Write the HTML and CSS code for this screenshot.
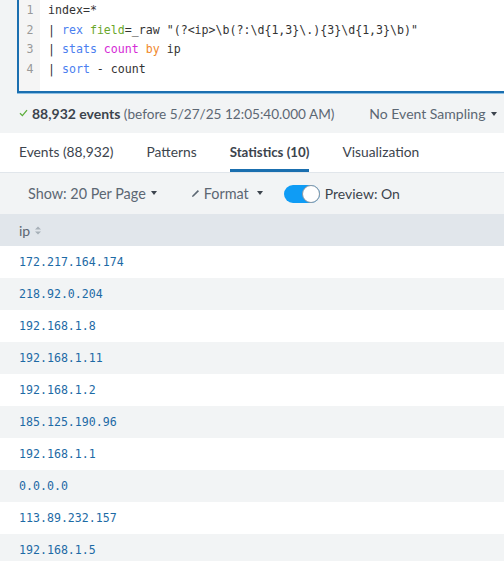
FILE: index.html
```html
<!DOCTYPE html>
<html>
<head>
<meta charset="utf-8">
<link rel="stylesheet" href="styles.css">
</head>
<body>
<div class="editor-wrap">
  <div class="editor">
    <div class="gutter">
      <div class="ln">1</div><div class="ln">2</div><div class="ln">3</div><div class="ln">4</div>
    </div>
    <div class="code">
      <div class="cl">index=*</div>
      <div class="cl">| <span class="kw">rex</span> <span class="arg">field</span>=_raw "(?&lt;ip&gt;\b(?:\d{1,3}\.){3}\d{1,3}\b)"</div>
      <div class="cl">| <span class="kw">stats</span> <span class="fn">count</span> <span class="by">by</span> ip</div>
      <div class="cl">| <span class="kw">sort</span> - count</div>
    </div>
  </div>
</div>
<div class="status">
  <div class="status-left">
    <svg class="check" width="9" height="8" viewBox="0 0 9 8"><path d="M1 4.2 L3.4 6.6 L8 1.2" fill="none" stroke="#5cae3a" stroke-width="1.3"/></svg>
    <span><b>88,932 events</b> (before 5/27/25 12:05:40.000 AM)</span>
  </div>
  <div class="status-right">No Event Sampling <span class="caret"></span></div>
</div>
<div class="tabs">
  <div class="tab">Events (88,932)</div>
  <div class="tab">Patterns</div>
  <div class="tab active">Statistics (10)</div>
  <div class="tab">Visualization</div>
</div>
<div class="toolbar">
  <div class="tool show">Show: 20 Per Page <span class="caret"></span></div>
  <div class="tool format">
    <svg class="pencil" width="9" height="9" viewBox="0 0 9 9"><path d="M1 8 L1.4 6.4 L6.8 1 L8 2.2 L2.6 7.6 Z" fill="#5c6773"/></svg>
    Format <span class="caret fcaret"></span>
  </div>
  <div class="tool preview">
    <span class="toggle"><span class="knob"></span></span>
    Preview: On
  </div>
</div>
<div class="table">
  <div class="thead">ip <svg class="sort" width="6" height="9" viewBox="0 0 6 9"><path d="M0 3.5 L3 0.5 L6 3.5 Z M0 5.5 L3 8.5 L6 5.5 Z" fill="#a7b0b8"/></svg></div>
  <div class="row">172.217.164.174</div>
  <div class="row alt">218.92.0.204</div>
  <div class="row">192.168.1.8</div>
  <div class="row alt">192.168.1.11</div>
  <div class="row">192.168.1.2</div>
  <div class="row alt">185.125.190.96</div>
  <div class="row">192.168.1.1</div>
  <div class="row alt">0.0.0.0</div>
  <div class="row">113.89.232.157</div>
  <div class="row alt">192.168.1.5</div>
</div>
</body>
</html>
```
FILE: styles.css
```css
* { box-sizing: border-box; }
html, body { margin: 0; padding: 0; }
body {
  width: 504px;
  background: #f2f4f5;
  font-family: Lato, "Open Sans", sans-serif;
  color: #3c444d;
  overflow: hidden;
}
.editor-wrap {
  padding-left: 17px;
  background: #f2f4f5;
}
.editor {
  display: flex;
  background: #fff;
  border-left: 2px solid #1b6fb0;
  border-bottom: 2px solid #1b6fb0;
  box-shadow: 0 1px 0 #8ec0e3;
  height: 93px;
}
.gutter {
  width: 21px;
  background: #f5f5f5;
  padding-top: 1px;
  text-align: center;
  font-family: "DejaVu Sans Mono", monospace;
  font-size: 11.6px;
  color: #999;
  line-height: 19.7px;
  padding-left: 1px;
}
.code {
  padding-top: 1px;
  padding-left: 8px;
  font-family: "DejaVu Sans Mono", monospace;
  font-size: 11.6px;
  line-height: 19.7px;
  color: #333;
}
.cl { white-space: pre; }
.kw { color: #4b80f0; }
.arg { color: #6aa72b; }
.fn { color: #d52bd6; }
.by { color: #f0892d; }

.status {
  height: 40px;
  display: flex;
  align-items: center;
  justify-content: space-between;
  padding: 0 7px 0 19px;
  font-size: 13.6px;
  color: #5c6773;
}
.status b { color: #3c444d; font-weight: 700; font-size: 14px; }
.check { margin-right: 4px; }
.status-left { display: flex; align-items: center; white-space: nowrap; }
.status-right { white-space: nowrap; font-size: 14px; }
.caret {
  display: inline-block;
  width: 0; height: 0;
  border-left: 3.5px solid transparent;
  border-right: 3.5px solid transparent;
  border-top: 4px solid #3c444d;
  vertical-align: middle;
  margin-left: 2px;
  position: relative;
  top: -1px;
}
.tabs {
  height: 40px;
  background: #fff;
  border-bottom: 1px solid #e1e6eb;
  display: flex;
  align-items: stretch;
  padding-left: 19px;
  gap: 33px;
  font-size: 13.8px;
  color: #3c444d;
}
.tab {
  display: flex;
  align-items: center;
  padding-top: 1px;
  border-bottom: 3px solid transparent;
}
.tab.active {
  font-weight: 700;
  font-size: 13.3px;
  border-bottom-color: #1a6faf;
}
.toolbar {
  height: 41px;
  display: flex;
  align-items: center;
  padding-left: 28px;
  font-size: 14.4px;
  color: #5c6773;
}
.tool { display: flex; align-items: center; white-space: nowrap; }
.show .caret { margin-left: 5px; }
.show { margin-right: 34px; }
.pencil { margin-right: 4px; }
.fcaret { margin-left: 8px; }
.format { margin-right: 21px; }
.toggle {
  width: 36px;
  height: 18px;
  border-radius: 9px;
  background: #0f9cf5;
  position: relative;
  margin-right: 5px;
}
.knob {
  position: absolute;
  right: 0; top: 0;
  width: 18px; height: 18px;
  border-radius: 50%;
  background: #fff;
  border: 1px solid #8b97a3;
}
.preview { color: #3c444d; font-size: 14px; }
.thead {
  height: 32px;
  background: #e1e6eb;
  display: flex;
  align-items: center;
  padding-left: 19px;
  font-size: 14px;
  color: #5c6773;
}
.sort { margin-left: 5px; }
.row {
  height: 32px;
  display: flex;
  align-items: center;
  padding-left: 19px;
  background: #fff;
  font-family: "DejaVu Sans Mono", monospace;
  font-size: 11.6px;
  color: #1d6aa5;
}
.row.alt { background: #f2f4f5; }
```
